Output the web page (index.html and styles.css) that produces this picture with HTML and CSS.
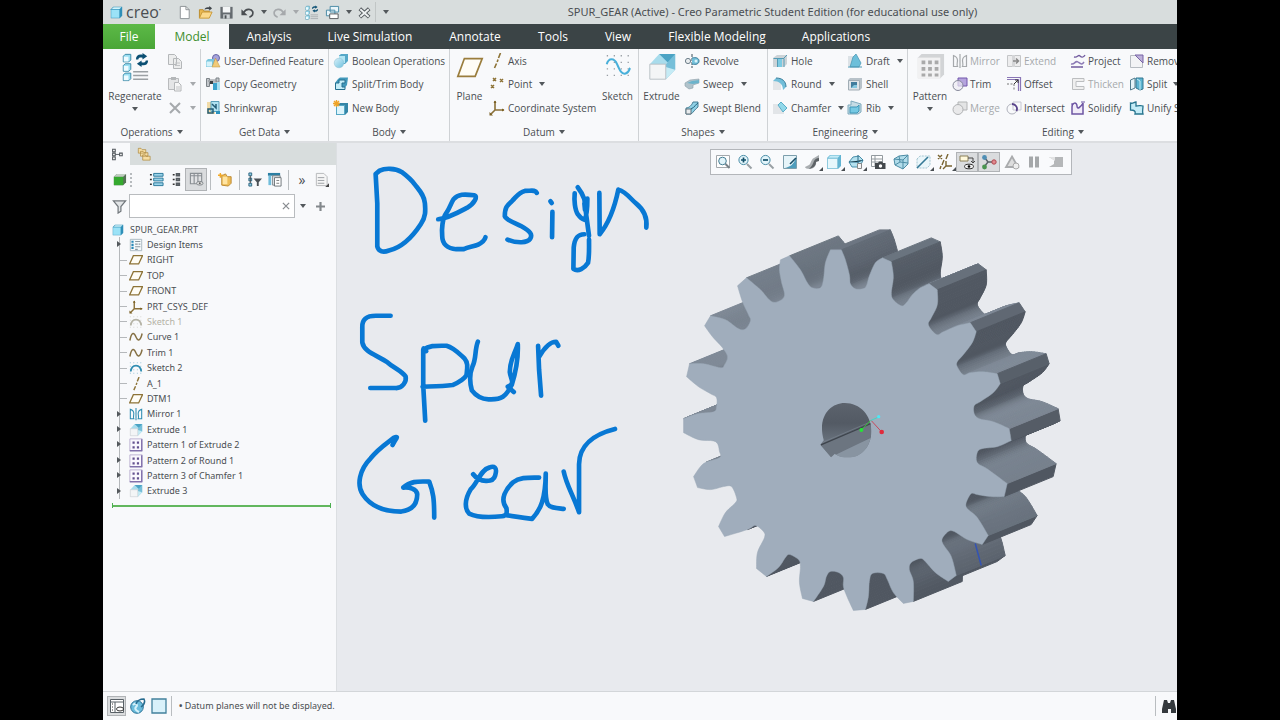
FILE: index.html
```html
<!DOCTYPE html>
<html lang="en">
<head>
<meta charset="utf-8">
<title>SPUR_GEAR (Active) - Creo Parametric Student Edition</title>
<link rel="stylesheet" href="styles.css">
</head>
<body>
<svg class="sprite" aria-hidden="true">
  <defs>
    <linearGradient id="g-blue" x2="1" y2="1"><stop stop-color="#d8f1fa"/><stop offset="1" stop-color="#6fc0dd"/></linearGradient>
    <linearGradient id="g-hole" x2="0" y2="1"><stop stop-color="#5f6670"/><stop offset=".4" stop-color="#535a64"/><stop offset=".75" stop-color="#6e7883"/><stop offset="1" stop-color="#8b97a4"/></linearGradient>
  </defs>
  <symbol id="cube" viewBox="0 0 16 16"><path d="M1 4 4 1h11v11l-3 3H1z" fill="#2f8fb8"/><path d="M1.500 4.500h10v10h-10z" fill="#9be2f7"/><path d="M2.200 3.700 4.400 1.600H14l-2.200 2.100z" fill="#d2f4fc"/></symbol>
  <symbol id="cubelight" viewBox="0 0 16 16"><path d="M1 4 4 1h11v11l-3 3H1z" fill="#62b4d2"/><path d="M1.500 4.500h10v10h-10z" fill="#e6f7fc" stroke="#8ac6dc" stroke-width=".8"/><path d="M2.200 3.700 4.400 1.600H14l-2.200 2.100z" fill="#c5ebf6"/></symbol>
  <symbol id="doc" viewBox="0 0 16 16"><path d="M3.500 1.500h6l3.500 3.500v9.500H3.500z" fill="#fff" stroke="#8b9093"/><path d="M9.500 1.500V5H13" fill="none" stroke="#8b9093"/></symbol>
  <symbol id="open" viewBox="0 0 16 16"><path d="M1.500 14V5h4l1 1.500H12V8" fill="#e9b850" stroke="#b98a2c"/><path d="m1.500 14 3-6.500H15L12 14z" fill="#fbd98b" stroke="#c79838"/><path d="M7 5c0-2 2-3 5-2.500V1l3 2.500L12 6V4.500C9.500 4 8 4 7 5z" fill="#3f454a"/></symbol>
  <symbol id="save" viewBox="0 0 16 16"><path d="M1.500 2h13v12.500h-13z" fill="#656b70"/><path d="M4 2h8v6H4z" fill="#f4f6f7"/><path d="M4.500 10h7v4.500h-7z" fill="#cfd4d7"/><path d="M6 11h2v3.500H6z" fill="#4a5054"/></symbol>
  <symbol id="undo" viewBox="0 0 16 16"><path d="M4 8c2-4 8-4.500 9.500-1 1 3-1 5-3.500 6" fill="none" stroke="currentColor" stroke-width="1.800"/><path d="M1.500 4.500v6.500h6.500z" fill="currentColor"/></symbol>
  <symbol id="redo" viewBox="0 0 16 16"><path d="M12 8c-2-4-8-4.500-9.500-1-1 3 1 5 3.500 6" fill="none" stroke="currentColor" stroke-width="1.800"/><path d="M14.500 4.500v6.500H8z" fill="currentColor"/></symbol>
  <symbol id="regen" viewBox="0 0 32 32"><g fill="#9be0f3" stroke="#3a87a5"><path d="M3.500 4.500 5.500 2.500h6v6l-2 2h-6zM3.500 14.500l2-2h6v6l-2 2h-6zM3.500 24.500l2-2h6v6l-2 2h-6z"/></g><path d="M4 5h5v5H4zM4 15h5v5H4zM4 25h5v5H4z" fill="#eefbff"/><g fill="#0b4f73"><path d="M17 8c0-4 3-6 7-5V1l5 3.500L24 8V6c-3-.5-4 0-4.500 2zM30 9c0 4-3 6-7 5v2l-5-3.500L23 9v2c3 .5 4 0 4.500-2z"/></g><path d="M14 21h16M14 25h16M14 29h16" stroke="#9ba0a4" stroke-width="1.500"/></symbol>
  <symbol id="windows" viewBox="0 0 16 16"><path d="M5.500 1.500h9v6h-9zM1.500 5.500h9v6h-9z" fill="#eaf5fa" stroke="#4487a3"/><path d="M5 9.500h9v5H5z" fill="#fff" stroke="#53585b"/></symbol>
  <symbol id="close" viewBox="0 0 16 16"><path d="m3 4 10 9m0-9-10 9" stroke="#53595d" stroke-width="4"/><path d="m3.500 4.500 9 8m0-8-9 8" stroke="#eef1f2" stroke-width="2"/></symbol>
  <symbol id="copy" viewBox="0 0 16 16"><path d="M1.500 1.500h6l2 2v8h-8zM6.500 5.500h5l3 3v7h-8z" fill="#eceded" stroke="#b4b7b9"/><path d="M8 10h5M8 12.500h5" stroke="#c2c4c6"/></symbol>
  <symbol id="paste" viewBox="0 0 16 16"><path d="M1.500 2.500h10v11h-10z" fill="#e4e5e6" stroke="#b9bbbd"/><path d="M4 1h5v3H4z" fill="#b4b7b9"/><path d="M7.500 6.500h4l2.500 2.500v6H7.500z" fill="#f6f6f6" stroke="#b4b7b9"/><path d="M9 11h4m-4 2h4" stroke="#c2c4c6"/></symbol>
  <symbol id="cross" viewBox="0 0 16 16"><path d="m3 3 10 10M13 3 3 13" stroke="currentColor" stroke-width="2"/></symbol>
  <symbol id="udf" viewBox="0 0 16 16"><circle cx="11" cy="5" r="3.500" fill="#a6a3dc" stroke="#6966a5"/><path d="M1 8 3 6h6v6l-2 2H1z" fill="#79c6de"/><path d="M1.500 8.500H7v5H1.500z" fill="#d5f2fa"/><path d="M10.500 5 15 14H7z" fill="#f1ca78" stroke="#b9923e" stroke-width=".5"/></symbol>
  <symbol id="copygeo" viewBox="0 0 16 16"><path d="M1.500 2.500h3v8h-3zM11 2h3v4h-3z" fill="#c3c7cb" stroke="#7d8388"/><path d="M4 4h7v2H4z" fill="#e2e4e7" stroke="#888d92"/><path d="M8 7h4v7H8z" fill="#3ba3cd"/><path d="M12 6h3v8h-3z" fill="#aadff0"/><path d="M5 5h3v3H5z" fill="#3a3f43"/></symbol>
  <symbol id="shrink" viewBox="0 0 16 16"><path d="M2 2h8v12H2z" fill="#f1dba8"/><path d="M6 1.500h8v10H6z" fill="#b1e2f1" stroke="#5b9fb8"/><path d="m7 4 4 4V4M3 9h5v4H3z" fill="none" stroke="#245d77" stroke-width="1.500"/><path d="M11 11h4v3h-4z" fill="#2d93bd"/></symbol>
  <symbol id="bool" viewBox="0 0 16 16"><path d="M6 2.500 8 1h7v7l-3 3H6z" fill="#56a8c8"/><path d="M6 3h6v7H6z" fill="#b2e5f3"/><circle cx="6" cy="10" r="4.800" fill="url(#g-blue)" stroke="#8dbfd0" stroke-width=".5"/></symbol>
  <symbol id="splitbody" viewBox="0 0 16 16"><path d="M5 3 7 1.500h8L14 9l-3 4H3l-1-6z" fill="#4299bb"/><path d="M2.500 7H6V4h6v3H9v4h3v2.500H2.500z" fill="#c5edf8" stroke="#256f8f"/></symbol>
  <symbol id="newbody" viewBox="0 0 16 16"><path d="M3 5 6 3h9v9l-3 3H3z" fill="#3485a6"/><path d="M3.500 5.500h8v9h-8z" fill="#dcf4fb" stroke="#56a7c5"/><path d="M3.500 0v7M0 3.500h7M1 1l5 5m0-5L1 6" stroke="#f0a427" stroke-width="1.400"/></symbol>
  <symbol id="plane" viewBox="0 0 16 16"><path d="M5 3h10.500l-4.500 9.500H.7z" fill="#fffdf6" stroke="#8d7337" stroke-width="1.500"/></symbol>
  <symbol id="planebig" viewBox="0 0 32 32"><path d="M10 7h19l-7.500 19H3z" fill="#fffdf6" stroke="#9a7d3c" stroke-width="1.800"/></symbol>
  <symbol id="axis" viewBox="0 0 16 16"><path d="m11.500 0-2 5M9 6.500 8.200 9M7.500 10.500 5.500 15" fill="none" stroke="#8d7337" stroke-width="1.600"/></symbol>
  <symbol id="point" viewBox="0 0 16 16"><path d="m4 2 3 3m0-3L4 5m7-2 3 3m0-3-3 3M2 9l3 3m0-3-3 3" stroke="#8d7337" stroke-width="1.500"/></symbol>
  <symbol id="csys" viewBox="0 0 16 16"><path d="M6 1v9h9M6 10l-4.500 4.500" fill="none" stroke="#8a7038" stroke-width="1.600"/><path d="M4.500 3 6 .5 7.500 3zM13 8.500l2.500 1.500-2.500 1.500zM.5 12v3.500H4z" fill="#7a6024"/></symbol>
  <symbol id="sketchbig" viewBox="0 0 32 32"><path d="M4 4h26M4 11h26M4 18h26M4 25h26" stroke="#999fa5" stroke-width="1.400" stroke-dasharray="1.400 6"/><path d="M4 13C6 6 12 6 15 13s5 11 9 10 4-5 5-6" fill="none" stroke="#49b0da" stroke-width="2.200"/></symbol>
  <symbol id="extrudebig" viewBox="0 0 32 32"><path d="M3 13 13 2h17L20 13z" fill="#a8dcec"/><path d="M13 2h17v17z" fill="#4ba3c4"/><path d="M20 13 30 2v17L20 29z" fill="#76bfd9"/><path d="m20 29 10-10-10-3z" fill="#c5ebf5"/><path d="M3 13h17v16H3z" fill="#f3f5f6" stroke="#b8bfc4"/></symbol>
  <symbol id="revolve" viewBox="0 0 16 16"><path d="M8 1v14" stroke="#394c59" stroke-dasharray="3 1"/><circle cx="4" cy="8" r="2.600" fill="#e9edef" stroke="#6d7e89"/><path d="M8 5c4-1 7 0 7 3s-3 4-7 3" fill="#73c0da" stroke="#3d7e9b"/><circle cx="12" cy="8" r="1.500" fill="#daf3fa"/></symbol>
  <symbol id="sweep" viewBox="0 0 16 16"><path d="m1 7 5-3 9-1v4L9 9v3l-4 1-4-3z" fill="#b1c3cb" stroke="#8b9ea8" stroke-width=".6"/><path d="m3 7 5-2 7-1v3L9 8z" fill="#6cb4cc"/></symbol>
  <symbol id="blend" viewBox="0 0 16 16"><path d="M2 14V8c3 0 6-3 7-6h5v5c-3 2-5 6-7 7z" fill="#8fd1e6" stroke="#477e95"/><path d="M2 9h5v5H2z" fill="#e8ecee" stroke="#65727a"/><path d="M7 9c4-2 5-5 7-6" stroke="#22607c" fill="none"/></symbol>
  <symbol id="hole" viewBox="0 0 16 16"><path d="m1 5 4-3h10v9l-3 3H1z" fill="#ccd3d7"/><path d="M5 5h5v9H5z" fill="#7ccae2"/><path d="M1.500 5.500H12V14M5.500 14V5.500M12 5l3-3" fill="none" stroke="#549bb5"/></symbol>
  <symbol id="round" viewBox="0 0 16 16"><path d="M1 5h8v9H1z" fill="#e3e6e9"/><path d="M1 5 4 2c6 0 10 3 10 9l-3 3c0-6-4-9-10-9z" fill="#72bed9"/><path d="M4 2c6 0 10 3 10 9" fill="none" stroke="#3b7f9b"/></symbol>
  <symbol id="chamfer" viewBox="0 0 16 16"><path d="M1 4h7l4 5v5H1z" fill="#e2e5e8"/><path d="m6 5 3-3 6 6-4 4z" fill="#91d8ea" stroke="#5baec8"/></symbol>
  <symbol id="draft" viewBox="0 0 16 16"><path d="M1 3h7v10H1z" fill="#dce2e6"/><path d="m6 4 3-3 5 9-2 4H3z" fill="#6dbfda" stroke="#4592b0" stroke-width=".7"/><path d="M1 14h14" stroke="#4d98b5"/></symbol>
  <symbol id="shell" viewBox="0 0 16 16"><path d="m1 4 2-2h12v10l-2 2H1z" fill="#b8c2c9"/><path d="M1.500 4.500h11V14h-11z" fill="#dfe4e8" stroke="#a1adb5"/><path d="M4 6h6v6H4z" fill="#417c9c"/><path d="m4 12 3-3h3v3z" fill="#84c7df"/></symbol>
  <symbol id="rib" viewBox="0 0 16 16"><path d="M1 5h3V1l10 3v8l-3 2H1z" fill="#c6dce5" stroke="#7faabd"/><path d="M3 7h7l2-2v6l-2 2H3z" fill="#76c9e3" stroke="#3f96b7"/></symbol>
  <symbol id="patternbig" viewBox="0 0 32 32"><path d="m3 6 4-4h24v22l-4 4H3z" fill="#d2d4d6"/><path d="M3 6h24v22H3z" fill="#f1f1f2"/><g fill="#aaa"><path d="M7 9h4v4H7zM14 9h4v4h-4zM21 9h4v4h-4zM7 16h4v4H7zM14 16h4v4h-4zM21 16h4v4h-4zM7 23h4v3H7zM14 23h4v3h-4zM21 23h4v3h-4z"/></g></symbol>
  <symbol id="mirror" viewBox="0 0 16 16"><path d="M1.500 2.500c3 1 4 3 4 5s-1 4 0 6h-4zM14.500 2.500c-3 1-4 3-4 5s1 4 0 6h4zM8 1v14" fill="none" stroke="currentColor" stroke-width="1.200"/></symbol>
  <symbol id="extend" viewBox="0 0 16 16"><path d="M1.500 2.500h13v11h-13z" fill="#ededee" stroke="#c4c6c8"/><path d="M6 2h3v12H6z" fill="#d5d6d8"/><path d="M7 8h5M10 5.500 12.500 8 10 10.500" fill="none" stroke="#888" stroke-width="1.500"/></symbol>
  <symbol id="trim" viewBox="0 0 16 16"><path d="M6 2h9v8H6z" fill="#b5a4dd" stroke="#7357ac"/><circle cx="6" cy="9.500" r="5" fill="#eeedf3" fill-opacity=".7" stroke="#85889a"/></symbol>
  <symbol id="merge" viewBox="0 0 16 16"><path d="M6 2h9v8H6z" fill="#e3e4e5" stroke="#b3b5b6"/><circle cx="6" cy="9.500" r="5" fill="#e9e9ea" stroke="#b0b2b4"/></symbol>
  <symbol id="offset" viewBox="0 0 16 16"><path d="M1 1.500h13.500V15M1 3.500h11.500V15" fill="none" stroke="#8a76b6" stroke-width="1.200"/><path d="M1 8h7v7" fill="none" stroke="#777" stroke-dasharray="2 1.500"/><path d="m8 8 4-4m-3 0h3v3" fill="none" stroke="#333"/></symbol>
  <symbol id="intersect" viewBox="0 0 16 16"><path d="M7 2h8v8H7z" fill="none" stroke="#c6c6d2"/><circle cx="6" cy="9" r="5" fill="none" stroke="#b0b2bc"/><path d="M6 4c4 0 6 4 4.500 7" fill="none" stroke="#59438b" stroke-width="1.800"/></symbol>
  <symbol id="project" viewBox="0 0 16 16"><path d="M1 11c4 1 4-4 7-2s4 3 6 0" fill="none" stroke="#8d7bb6" stroke-width="1.500"/><path d="M4 4c4 1 4-3 6-1s4 1 5-1M1 14h12" fill="none" stroke="#725b9f" stroke-width="1.300"/></symbol>
  <symbol id="thicken" viewBox="0 0 16 16"><path d="M14 2.500H2.500v11H14v-3H6v-5h8z" fill="#efefef" stroke="#bcbec0"/></symbol>
  <symbol id="solidify" viewBox="0 0 16 16"><path d="M2 14V7c0-5 5-5 5-1s4 1 6-3v11z" fill="#f1ecf8" stroke="#6d55a3" stroke-width="1.500"/><path d="M1 4h3m7-2h4" stroke="#6d55a3"/></symbol>
  <symbol id="remove" viewBox="0 0 16 16"><path d="M1.500 2.500h12v12h-12z" fill="#f2f3f5" stroke="#b6bbc1"/><path d="M6 2h8v8z" fill="#bdb1da" stroke="#7763a4"/></symbol>
  <symbol id="split" viewBox="0 0 16 16"><path d="M1.500 4 6 2v10l-4.500 2z" fill="#e5f3f8" stroke="#517c8d"/><path d="M7 2h7v11l-3 1-4-2z" fill="#5cb4d1" stroke="#347790"/><path d="m8 3 3 2v9" stroke="#c6ebf5" fill="none"/></symbol>
  <symbol id="unify" viewBox="0 0 16 16"><path d="M1.500 3C4 4 5 2 7 2v4c4 0 4-1 7 0 0 4-1 4 0 8H6c1-3-1-4-4.500-4z" fill="#c4ecf7" stroke="#27758f" stroke-width="1.300"/></symbol>
  <symbol id="treeicon" viewBox="0 0 16 16"><path d="M3 2.500h3v3H3zM3 7h3v3H3zM3 11.500h3v3H3zM11 7h3v3h-3z" fill="#fff" stroke="#50565b" stroke-width="1.200"/><path d="M6 8.500h5" stroke="#50565b"/></symbol>
  <symbol id="folders" viewBox="0 0 16 16"><path d="M1.500 3V1.500h3L6 3h4v4H1.500zM4 7V5h3l1 1.500h4.500v4H4zM6.500 11V9h3l1 1.500H15V15H6.500z" fill="#f6dda2" stroke="#aa873d" stroke-width=".8"/></symbol>
  <symbol id="greencube" viewBox="0 0 16 16"><path d="m2 5 3-3h10v9l-3 3H2z" fill="#567157"/><path d="M2 5h10v9H2z" fill="#35a92f"/><path d="m2 5 3-3h10l-3 3z" fill="#c0cec1"/></symbol>
  <symbol id="listblue" viewBox="0 0 16 16"><path d="M5 1.500h10v3H5zM5 6.500h10v3H5zM5 11.500h10v3H5z" fill="#9bd4ea" stroke="#28779a"/><path d="M1 3h2M1 8h2m-2 5h2" stroke="#333" stroke-width="1.500"/></symbol>
  <symbol id="listgray" viewBox="0 0 16 16"><path d="M8 2h3v2H8zM8 7h3v2H8zM8 12h3v2H8z" stroke="#555b60" stroke-width="1.700" fill="#a9adb0"/><path d="M4 3h2M4 8h2m-2 5h2" stroke="#333" stroke-width="1.500"/></symbol>
  <symbol id="cols" viewBox="0 0 16 16"><path d="M1.500 1.500h12v11h-12zM2 4h12M5.500 2v11m4-11v11" fill="#e1e2e4" stroke="#8a8f94" stroke-width="1.200"/><ellipse cx="11.500" cy="12" rx="3.500" ry="2" fill="#ddd" stroke="#81868b"/><circle cx="11.500" cy="12" r="1" fill="#666"/></symbol>
  <symbol id="orange" viewBox="0 0 16 16"><path d="m4 4 4-2 2 3h4v7l-3 3-7-1z" fill="#eebd57" stroke="#bb8830"/><path d="M5 5h5v8H5z" fill="#ffe4a2"/><path d="M2.500 1v5M0 3.500h5" stroke="#f2a927" stroke-width="1.500"/></symbol>
  <symbol id="treefilter" viewBox="0 0 16 16"><path d="M2 1h3v3H2zM2 6.500h3v3H2zM2 12h3v3H2z" fill="#8bcbe3" stroke="#2f6580"/><path d="M3.500 4v8" stroke="#444"/><path d="M7 7h9l-3.500 4v4h-2v-4z" fill="#4b5156"/></symbol>
  <symbol id="columns" viewBox="0 0 16 16"><path d="M1 1h13v3H1z" fill="#2c7fa3"/><path d="M1.500 4h3v10h-3z" fill="#71bddb"/><path d="M6 4h8v10H6z" fill="#e4e8eb" stroke="#7c8388"/><path d="M8 6h7v9H8z" fill="#fff" stroke="#6c7378"/><path d="M10 9h3m-3 3h3" stroke="#777"/></symbol>
  <symbol id="docset" viewBox="0 0 16 16"><path d="M2.500 1.500h8L14 5v9.500H2.500z" fill="#f6f6f6" stroke="#b5b8ba"/><path d="M4 6h7M4 9h7m-7 3h7" stroke="#999da1"/><path d="M16 12v4h-4z" fill="#444"/></symbol>
  <symbol id="funnel" viewBox="0 0 16 16"><path d="M1.500 2h13L9.500 8v5l-3 2V8z" fill="#e2e5e7" stroke="#71777c" stroke-width="1.300"/></symbol>
  <symbol id="design" viewBox="0 0 16 16"><path d="M1.500 1.500h13v13h-13z" fill="#f5fafc" stroke="#a4b4bd"/><path d="M4 3v10" stroke="#2a89b7" stroke-width="2.500" stroke-dasharray="2.500 1"/><path d="M7 4h6M7 7h3m1 0h2m-6 3h6m-6 3h3" stroke="#8a979f" stroke-width="1.200"/></symbol>
  <symbol id="sk" viewBox="0 0 16 16"><path d="M1 2h14M1 6h14M1 10h14M1 14h14" stroke="currentColor" stroke-opacity=".6" stroke-dasharray="1 3"/><path d="M2 12C3 3 13 3 14 12" fill="none" stroke="currentColor" stroke-width="2"/></symbol>
  <symbol id="curve" viewBox="0 0 16 16"><path d="M1 12C3 1 6 3 8 8s5 5 7-4" fill="none" stroke="#857044" stroke-width="1.700"/></symbol>
  <symbol id="pattern" viewBox="0 0 16 16"><path d="M1 1h14v14H1z" fill="#faf8fd" stroke="#b6abce"/><path d="M14.500 1.500v13H1" fill="none" stroke="#8171ab" stroke-width="1.500"/><path d="M4 4h2.500v2.500H4zM9 4h2.500v2.500H9zM4 9.500h2.500V12H4zM9 9.500h2.500V12H9z" fill="#64518f"/></symbol>
  <symbol id="refit" viewBox="0 0 16 16"><path d="M1.500 1.500h13v12h-13z" fill="#fff" stroke="#a4a9ad"/><circle cx="7.500" cy="7" r="3.800" fill="#e2f4fa" stroke="#457d93"/><path d="m10.500 10 4 4" stroke="#768087" stroke-width="2"/></symbol>
  <symbol id="zoomin" viewBox="0 0 16 16"><circle cx="6.500" cy="6" r="4.600" fill="#e2f4fa" stroke="#4b8ea8"/><path d="m10 10 4.500 4.500" stroke="#9aa0a4" stroke-width="2"/><path d="M4 6h5M6.500 3.500v5" stroke="#124e68" stroke-width="1.700"/></symbol>
  <symbol id="zoomout" viewBox="0 0 16 16"><circle cx="6.500" cy="6" r="4.600" fill="#e2f4fa" stroke="#4b8ea8"/><path d="m10 10 4.500 4.500" stroke="#9aa0a4" stroke-width="2"/><path d="M4 6h5" stroke="#124e68" stroke-width="1.700"/></symbol>
  <symbol id="repaint" viewBox="0 0 16 16"><path d="M1.500 1.500h13v13h-13z" fill="#e6f4f9" stroke="#7c9eac"/><path d="M14 4v10H3c5-1 9-4 11-10z" fill="#4f9dbc"/><path d="M14 4 8 10" stroke="#184d66" stroke-width="1.600"/></symbol>
  <symbol id="shade" viewBox="0 0 16 16"><path d="M15 1v4l-3 2c1 4-2 8-6 8-3 0-5-1-5-2l4-2c2-1 2-6 5-7z" fill="#a9adb0"/><path d="M15 4v3l-3 1c0 4-3 6-7 7 3-3 4-5 5-8 1-2 3-3 5-3z" fill="#5c6165"/></symbol>
  <symbol id="view" viewBox="0 0 16 16"><path d="M1 8 5 3l6-1 4 4-3 7H4z" fill="#b4e1ef" stroke="#4a8faa"/><path d="M1 8h9l5-2M10 1v8" stroke="#2b6d88"/><path d="M9.500 9.500h4v5h-4z" fill="#f4f4f4" stroke="#888"/></symbol>
  <symbol id="camera" viewBox="0 0 16 16"><path d="M1.500 1.500h11v11h-11zM2 5h10M2 8h10M5 2v10" fill="#fff" stroke="#939a9f"/><path d="M5 9h3l1-1.500h3L13 9h2.500v6H5z" fill="#43484c"/><circle cx="10.500" cy="12" r="1.700" fill="#fff"/></symbol>
  <symbol id="persp" viewBox="0 0 16 16"><path d="m1 5 5-3 9-1v9l-5 5-8-4z" fill="#b1dcea" stroke="#4c8ca5"/><path d="m1 5 9 1 5-5m-5 5v9M2 11l5-3 8 1M6 2l1 6" fill="none" stroke="#4c8ca5"/></symbol>
  <symbol id="section" viewBox="0 0 16 16"><path d="m2 5 3-3h10v9l-3 3H2z" fill="#eaf6fa" stroke="#a4c6d2" stroke-dasharray="2 1"/><path d="M2 14 13 3" stroke="#347895" stroke-width="1.600"/></symbol>
  <symbol id="datums" viewBox="0 0 16 16"><path d="m1 1 4 4m0-4L1 5m10-5L9 5M7 6 5 11m-1 1-1 3M9 7v5h6m-6 0-3 3" fill="none" stroke="#796431" stroke-width="1.400"/></symbol>
  <symbol id="annot" viewBox="0 0 16 16"><path d="M1 2h8v5H1z" fill="#fff9dc" stroke="#8b8058"/><path d="M9 4h5v5m-2-2 2 2 2-2" fill="none" stroke="#444"/><ellipse cx="10" cy="12.500" rx="4.500" ry="2.300" fill="#eee" stroke="#333"/><circle cx="10" cy="12.500" r="1.300"/></symbol>
  <symbol id="spin" viewBox="0 0 16 16"><path d="m4 4 3 4-4 5M7 8h6" fill="none" stroke="#596268" stroke-width="1.500"/><circle cx="3.500" cy="3.500" r="2.400" fill="#4f8fb5"/><circle cx="3.500" cy="13" r="2.400" fill="#49944f"/><circle cx="13" cy="8" r="2.200" fill="#e0898e" stroke="#b04a51"/></symbol>
  <symbol id="tri" viewBox="0 0 16 16"><path d="M8 2.500 14 13H2z" fill="#ddd" stroke="#a9abad" stroke-width="1.800"/><circle cx="12" cy="12" r="3" fill="#eee" stroke="#aaa"/></symbol>
  <symbol id="pause" viewBox="0 0 16 16"><path d="M3 2.500h4v11H3zM9 2.500h4v11H9z" fill="#a5a8aa"/></symbol>
  <symbol id="end" viewBox="0 0 16 16"><path d="M1 3h14v10H1l5-3V6z" fill="#b5b7b9"/><path d="M1 3h6v4z" fill="#e2e3e4"/></symbol>
  <symbol id="panel" viewBox="0 0 16 16"><path d="M1.500 1.500h13v13h-13z" fill="#fff" stroke="#596167"/><path d="M2 4h12M6 4v10" stroke="#596167"/><path d="M3 6h1m-1 3h1m-1 3h1" stroke="#333"/><ellipse cx="11" cy="11" rx="3.500" ry="2" fill="none" stroke="#333"/></symbol>
  <symbol id="globe" viewBox="0 0 16 16"><circle cx="7" cy="9" r="6.300" fill="#6bbcdc" stroke="#2d7397"/><path d="M3 7c3-3 5 0 3 2s1 4 3 5" fill="none" stroke="#d6f1fa" stroke-width="2"/><path d="M11 9c4-3 4-6 3-8-4 0-7 2-8 5" fill="none" stroke="#276b8e" stroke-width="1.500"/></symbol>
  <symbol id="square" viewBox="0 0 16 16"><path d="M1 1h14v14H1z" fill="#d9f1fa" stroke="#41809c" stroke-width="1.300"/></symbol>
  <symbol id="binoc" viewBox="0 0 16 16"><path d="M3 2h3l1 3h2l1-3h3l2 9v4h-5v-4H7v4H1v-4z" fill="#34393d"/></symbol>
</svg>

<div class="app">
  <header class="titlebar">
    <div class="brand"><svg class="ic"><use href="#cube"/></svg><span>creo<sup>•</sup></span></div>
    <nav class="quick" aria-label="Quick access">
      <button aria-label="New"><svg class="ic"><use href="#doc"/></svg></button>
      <button aria-label="Open"><svg class="ic"><use href="#open"/></svg></button>
      <button aria-label="Save"><svg class="ic"><use href="#save"/></svg></button>
      <button aria-label="Undo"><svg class="ic"><use href="#undo"/></svg></button>
      <button class="slim" aria-label="Undo list"><i class="caret"></i></button>
      <button class="off" aria-label="Redo"><svg class="ic"><use href="#redo"/></svg></button>
      <button class="slim off" aria-label="Redo list"><i class="caret"></i></button>
      <button aria-label="Regenerate model"><svg class="ic"><use href="#regen"/></svg></button>
      <button aria-label="Windows"><svg class="ic"><use href="#windows"/></svg></button>
      <button class="slim" aria-label="Windows list"><i class="caret"></i></button>
      <button aria-label="Close"><svg class="ic"><use href="#close"/></svg></button>
      <button class="customize" aria-label="Customize toolbar"><i class="caret"></i></button>
    </nav>
    <h1>SPUR_GEAR (Active) - Creo Parametric Student Edition (for educational use only)</h1>
  </header>

  <nav class="tabs" aria-label="Ribbon tabs">
    <button class="tab file">File</button>
    <button class="tab model">Model</button>
    <button class="tab analysis">Analysis</button>
    <button class="tab live">Live Simulation</button>
    <button class="tab annotate">Annotate</button>
    <button class="tab tools">Tools</button>
    <button class="tab view">View</button>
    <button class="tab flexible">Flexible Modeling</button>
    <button class="tab apps">Applications</button>
  </nav>

  <section class="ribbon" aria-label="Model ribbon">
    <div class="group operations">
      <div class="items">
        <button class="big"><svg><use href="#regen"/></svg><span>Regenerate</span><i class="caret"></i></button>
        <div class="col">
          <button class="cmd off" aria-label="Copy"><svg class="ic"><use href="#copy"/></svg></button>
          <button class="cmd off" aria-label="Paste"><svg class="ic"><use href="#paste"/></svg><i class="caret"></i></button>
          <button class="cmd off" aria-label="Delete"><svg class="ic"><use href="#cross"/></svg><i class="caret"></i></button>
        </div>
      </div>
      <button class="gname">Operations<i class="caret"></i></button>
    </div>
    <div class="group getdata">
      <div class="items"><div class="col">
        <button class="cmd"><svg class="ic"><use href="#udf"/></svg>User-Defined Feature</button>
        <button class="cmd"><svg class="ic"><use href="#copygeo"/></svg>Copy Geometry</button>
        <button class="cmd"><svg class="ic"><use href="#shrink"/></svg>Shrinkwrap</button>
      </div></div>
      <button class="gname">Get Data<i class="caret"></i></button>
    </div>
    <div class="group bodygrp">
      <div class="items"><div class="col">
        <button class="cmd"><svg class="ic"><use href="#bool"/></svg>Boolean Operations</button>
        <button class="cmd"><svg class="ic"><use href="#splitbody"/></svg>Split/Trim Body</button>
        <button class="cmd"><svg class="ic"><use href="#newbody"/></svg>New Body</button>
      </div></div>
      <button class="gname">Body<i class="caret"></i></button>
    </div>
    <div class="group datum">
      <div class="items">
        <button class="big"><svg><use href="#planebig"/></svg><span>Plane</span></button>
        <div class="col">
          <button class="cmd"><svg class="ic"><use href="#axis"/></svg>Axis</button>
          <button class="cmd"><svg class="ic"><use href="#point"/></svg>Point<i class="caret"></i></button>
          <button class="cmd"><svg class="ic"><use href="#csys"/></svg>Coordinate System</button>
        </div>
        <button class="big"><svg><use href="#sketchbig"/></svg><span>Sketch</span></button>
      </div>
      <button class="gname">Datum<i class="caret"></i></button>
    </div>
    <div class="group shapes">
      <div class="items">
        <button class="big"><svg><use href="#extrudebig"/></svg><span>Extrude</span></button>
        <div class="col">
          <button class="cmd"><svg class="ic"><use href="#revolve"/></svg>Revolve</button>
          <button class="cmd"><svg class="ic"><use href="#sweep"/></svg>Sweep<i class="caret"></i></button>
          <button class="cmd"><svg class="ic"><use href="#blend"/></svg>Swept Blend</button>
        </div>
      </div>
      <button class="gname">Shapes<i class="caret"></i></button>
    </div>
    <div class="group engineering">
      <div class="items">
        <div class="col">
          <button class="cmd"><svg class="ic"><use href="#hole"/></svg>Hole</button>
          <button class="cmd"><svg class="ic"><use href="#round"/></svg>Round<i class="caret"></i></button>
          <button class="cmd"><svg class="ic"><use href="#chamfer"/></svg>Chamfer<i class="caret"></i></button>
        </div>
        <div class="col">
          <button class="cmd"><svg class="ic"><use href="#draft"/></svg>Draft<i class="caret"></i></button>
          <button class="cmd"><svg class="ic"><use href="#shell"/></svg>Shell</button>
          <button class="cmd"><svg class="ic"><use href="#rib"/></svg>Rib<i class="caret"></i></button>
        </div>
      </div>
      <button class="gname">Engineering<i class="caret"></i></button>
    </div>
    <div class="group editing">
      <div class="items">
        <button class="big"><svg><use href="#patternbig"/></svg><span>Pattern</span><i class="caret"></i></button>
        <div class="col c1">
          <button class="cmd off"><svg class="ic"><use href="#mirror"/></svg>Mirror</button>
          <button class="cmd"><svg class="ic"><use href="#trim"/></svg>Trim</button>
          <button class="cmd off"><svg class="ic"><use href="#merge"/></svg>Merge</button>
        </div>
        <div class="col c2">
          <button class="cmd off"><svg class="ic"><use href="#extend"/></svg>Extend</button>
          <button class="cmd"><svg class="ic"><use href="#offset"/></svg>Offset</button>
          <button class="cmd"><svg class="ic"><use href="#intersect"/></svg>Intersect</button>
        </div>
        <div class="col c3">
          <button class="cmd"><svg class="ic"><use href="#project"/></svg>Project</button>
          <button class="cmd off"><svg class="ic"><use href="#thicken"/></svg>Thicken</button>
          <button class="cmd"><svg class="ic"><use href="#solidify"/></svg>Solidify</button>
        </div>
        <div class="col c4">
          <button class="cmd"><svg class="ic"><use href="#remove"/></svg>Remove</button>
          <button class="cmd"><svg class="ic"><use href="#split"/></svg>Split<i class="caret"></i></button>
          <button class="cmd"><svg class="ic"><use href="#unify"/></svg>Unify Surfaces</button>
        </div>
      </div>
      <button class="gname">Editing<i class="caret"></i></button>
    </div>
  </section>

  <main class="work">
    <aside class="side">
      <div class="sidetabs">
        <button class="stab on" aria-label="Model tree"><svg class="ic"><use href="#treeicon"/></svg></button>
        <button class="stab" aria-label="Folders"><svg class="ic"><use href="#folders"/></svg></button>
      </div>
      <div class="sidetools">
        <button class="t1" aria-label="Model"><svg class="ic"><use href="#greencube"/></svg></button>
        <i class="grip"></i>
        <button aria-label="Expand list"><svg class="ic"><use href="#listblue"/></svg></button>
        <button aria-label="Collapse list"><svg class="ic"><use href="#listgray"/></svg></button>
        <button class="pressed" aria-label="Show columns"><svg class="ic"><use href="#cols"/></svg></button>
        <i class="vline"></i>
        <button aria-label="Add item"><svg class="ic"><use href="#orange"/></svg></button>
        <i class="vline"></i>
        <button aria-label="Tree filters"><svg class="ic"><use href="#treefilter"/></svg></button>
        <button aria-label="Tree columns"><svg class="ic"><use href="#columns"/></svg></button>
        <i class="vline"></i>
        <button class="more" aria-label="More">»</button>
        <button aria-label="Settings"><svg class="ic"><use href="#docset"/></svg></button>
      </div>
      <div class="search">
        <svg class="ic"><use href="#funnel"/></svg>
        <label class="box"><input type="text" aria-label="Filter tree"><svg><use href="#cross"/></svg></label>
        <button aria-label="Filter options"><i class="caret"></i></button>
        <button class="plus" aria-label="Add filter"><svg viewBox="0 0 10 10"><path d="M5 0v10M0 5h10" stroke="#83888c" stroke-width="2.400"/></svg></button>
      </div>
      <ul class="tree">
        <li class="root"><svg class="ti"><use href="#cube"/></svg>SPUR_GEAR.PRT</li>
        <li class="exp"><svg class="ti"><use href="#design"/></svg>Design Items</li>
        <li><svg class="ti"><use href="#plane"/></svg>RIGHT</li>
        <li><svg class="ti"><use href="#plane"/></svg>TOP</li>
        <li><svg class="ti"><use href="#plane"/></svg>FRONT</li>
        <li><svg class="ti"><use href="#csys"/></svg>PRT_CSYS_DEF</li>
        <li class="hiddenitem"><svg class="ti"><use href="#sk"/></svg>Sketch 1</li>
        <li><svg class="ti"><use href="#curve"/></svg>Curve 1</li>
        <li><svg class="ti"><use href="#curve"/></svg>Trim 1</li>
        <li><svg class="ti blue"><use href="#sk"/></svg>Sketch 2</li>
        <li><svg class="ti"><use href="#axis"/></svg>A_1</li>
        <li><svg class="ti"><use href="#plane"/></svg>DTM1</li>
        <li class="exp"><svg class="ti blue"><use href="#mirror"/></svg>Mirror 1</li>
        <li class="exp"><svg class="ti"><use href="#extrudebig"/></svg>Extrude 1</li>
        <li class="exp"><svg class="ti"><use href="#pattern"/></svg>Pattern 1 of Extrude 2</li>
        <li class="exp"><svg class="ti"><use href="#pattern"/></svg>Pattern 2 of Round 1</li>
        <li class="exp"><svg class="ti"><use href="#pattern"/></svg>Pattern 3 of Chamfer 1</li>
        <li class="exp"><svg class="ti"><use href="#extrudebig"/></svg>Extrude 3</li>
      </ul>
      <div class="insert"></div>
    </aside>

    <section class="canvas" aria-label="Graphics area">
      <svg class="scene" viewBox="336 143 841 548" preserveAspectRatio="xMinYMin meet">
        <g id="gear"></g>
        <g transform="translate(670 410) scale(.33333)">
          <clipPath id="bore"><path d="M460 92C440 20 480-20 523-20c46 0 80 37 80 84 0 46-30 80-70 80-16 0-30-4-40-12l-11 11-32-38z"/></clipPath>
          <g clip-path="url(#bore)">
            <path d="M430-40h200v200H430z" fill="url(#g-hole)"/>
            <path d="M440 108 610 37v42L470 150z" fill="#6c7580"/>
            <path d="m470 148 140-68v80H470z" fill="#8894a1"/>
            <path d="m448 107 160-68" stroke="#3e444c" stroke-width="4"/>
            <path d="m452 100 150-64" stroke="#7a848f" stroke-width="2"/>
          </g>
          <path d="m573 61 27-28" stroke="#35c43c" stroke-width="3"/>
          <path d="m600 33 25-11" stroke="#3cd8c4" stroke-width="3"/>
          <path d="m603 33 31 34" stroke="#c8485a" stroke-width="3"/>
          <circle cx="573" cy="61" r="6" fill="#25e336"/><circle cx="625" cy="21" r="5" fill="#4fe6f5"/><circle cx="634" cy="67" r="7" fill="#e02b3c"/>
        </g>
        <path d="m975 544 6 22" stroke="#3353b4" stroke-width="1.500"/>
        <g class="ink" transform="translate(340 150) scale(.33333)">
          <path d="M104 72 109 160V290c4 16 18 18 35 12 40-10 70-40 96-80 15-22 14-40 12-62-2-24-16-38-30-56-12-16-24-26-40-38-20-12-50-12-66-4z"/>
          <path d="M292 208c28-2 60-20 86-34 24-14 34-36 22-38-30-4-48-4-62 12-8 12-10 24-22 42-12 16-14 50-12 68 0 24 16 38 42 40h22c14-8 32-8 44-14 12-6 20-14 22-22"/>
          <path d="M588 129c-4-10-16-6-36-6-18 4-24 16-38 30-16 14-22 20-22 46 4 12 32 20 50 30 28 16 34 26 26 38-8 12-38 14-68 2"/>
          <path d="M629 154l4 5M635 186l-1 76"/>
          <path d="M702 130c-2 20 0 50 10 64 8 12 14 14 20 16 6-12 8-34 8-64M711 112c8 10 14 20 20 36l6 50 8 60M731 160l2 20"/>
          <path d="M731 253c-24 0-30 18-32 40l-1 64c14 10 34-2 44-18 4-20 3-40 3-70"/>
          <path d="m776 129 1 124c28-34 44-76 56-134 26 8 36 28 54 42 20 16 34 38 30 72"/>
          <path d="M149 498h-44c-30 0-42 12-41 34v46c6 30 44 38 76 60 20 18 40 24 54 42 4 16-10 36-30 35H88"/>
          <path d="m253 813-6-105V600c20-14 40-12 70-12 22 6 36 22 54 38 12 14 8 30 6 50-8 14-24 22-42 30-30 4-60 4-90 5M256 604l-8-8"/>
          <path d="M411 576c-10 26-4 50-16 74-10 24-8 50-2 72 12 16 28 26 50 27 40 2 52-8 70-44 12-38 20-76 18-122-8 28-24 46-24 84 2 20 18 34-6 44l18 16"/>
          <path d="m592 588 3 72 6 78M596 620c14-24 32-44 50-44l7 12"/>
          <path d="m167 864-12 22c8-18 22-28 4-22-26 20-48 34-70 62-34 34-42 80-24 108 22 34 60 52 116 52 30-4 48-20 48-52-2-16-24-22-42-20 24-22 50-18 78-18 12 32 15 50 15 108"/>
          <path d="M397 974c20 26 60 26 66 4 8-26-4-30-18-24-26 6-34 46-56 66-18 30-18 58-4 72 20 10 60 12 98 8 16-2 16-10 14-24-22-28 0-60 20-78 20-16 46-14 78-14M494 1096c20 4 50 8 80 12 26-28 40-60 41-136 0 46-4 70 6 92 8 12 28 12 48 14"/>
          <path d="M669 966c8 40 28 70 46 122V944c0-56 44-90 108-106"/>
        </g>
      </svg>
      <div class="viewbar" role="toolbar" aria-label="View">
        <button aria-label="Refit"><svg class="ic"><use href="#refit"/></svg></button>
        <button aria-label="Zoom in"><svg class="ic"><use href="#zoomin"/></svg></button>
        <button aria-label="Zoom out"><svg class="ic"><use href="#zoomout"/></svg></button>
        <button aria-label="Repaint"><svg class="ic"><use href="#repaint"/></svg></button>
        <button class="drop" aria-label="Rendering"><svg class="ic"><use href="#shade"/></svg></button>
        <button class="drop" aria-label="Display style"><svg class="ic"><use href="#cubelight"/></svg></button>
        <button class="drop" aria-label="Saved views"><svg class="ic"><use href="#view"/></svg></button>
        <button aria-label="View images"><svg class="ic"><use href="#camera"/></svg></button>
        <button aria-label="Perspective"><svg class="ic"><use href="#persp"/></svg></button>
        <button class="drop" aria-label="Section"><svg class="ic"><use href="#section"/></svg></button>
        <button class="drop" aria-label="Datum display"><svg class="ic"><use href="#datums"/></svg></button>
        <button class="pressed" aria-label="Annotations"><svg class="ic"><use href="#annot"/></svg></button>
        <button class="pressed" aria-label="Spin center"><svg class="ic"><use href="#spin"/></svg></button>
        <button aria-label="Simulate"><svg class="ic"><use href="#tri"/></svg></button>
        <button aria-label="Pause"><svg class="ic"><use href="#pause"/></svg></button>
        <button aria-label="End"><svg class="ic"><use href="#end"/></svg></button>
      </div>
    </section>
  </main>

  <footer class="status">
    <button class="pressed" aria-label="Navigator"><svg class="ic"><use href="#panel"/></svg></button>
    <button aria-label="Browser"><svg class="ic"><use href="#globe"/></svg></button>
    <button aria-label="Full screen"><svg class="ic"><use href="#square"/></svg></button>
    <i class="vline"></i>
    <p><b>•</b> Datum planes will not be displayed.</p>
    <i class="vline"></i>
    <button aria-label="Find"><svg class="ic"><use href="#binoc"/></svg></button>
  </footer>
</div>
<script src="gear.js"></script>
</body>
</html>
```
FILE: styles.css
```css
* { box-sizing: border-box; }
body {
  margin: 0;
  background: #000;
  color: #4a4e52;
  font: 10px/14px "Open Sans", "Noto Sans", sans-serif;
}
button {
  display: flex;
  align-items: center;
  justify-content: center;
  margin: 0;
  padding: 0;
  border: 0;
  background: none;
  color: inherit;
  font: inherit;
  white-space: nowrap;
}
.sprite { position: absolute; width: 0; height: 0; }
.ic { width: 16px; height: 16px; flex: none; }
.caret {
  flex: none;
  border: 3px solid transparent;
  border-top: 4px solid #53585c;
  border-bottom: 0;
}
.off { color: #a6a9ac; }
.off .caret { border-top-color: #a6a9ac; }
.vline { width: 1px; height: 20px; background: #b9bdc0; }

.app {
  display: flex;
  flex-direction: column;
  height: 100vh;
  margin: 0 103px;
  overflow: hidden;
  background: #f8f9fb;
}

/* Title bar */
.titlebar { display: flex; align-items: center; flex: none; height: 24px; background: #d8dddd; }
.brand { display: flex; align-items: center; gap: 3px; width: 71px; padding-left: 7px; font: 16px/20px "Open Sans", sans-serif; }
.brand sup { font-size: 6px; line-height: 6px; vertical-align: 6px; }
.brand .ic { width: 13px; height: 13px; }
.quick { display: flex; }
.quick button { width: 21px; height: 20px; }
.quick .ic { width: 15px; height: 15px; }
.quick .slim { width: 11px; }
.quick .customize { border-left: 1px solid #c1c6c6; }
.titlebar h1 { flex: 1; margin: 0; padding-right: 28px; text-align: center; font: 11px/14px "Noto Sans", sans-serif; }

/* Tabs */
.tabs { display: flex; flex: none; height: 25px; background: #3b4446; color: #fff; font-size: 12px; }
.tab.file { width: 52px; background: linear-gradient(#5cb947, #4aa637); }
.tab.model { width: 74px; background: #f8f9fb; color: #3e8f2d; }
.tab.analysis { width: 80px; }
.tab.live { width: 122px; }
.tab.annotate { width: 88px; }
.tab.tools { width: 68px; }
.tab.view { width: 62px; }
.tab.flexible { width: 136px; }
.tab.apps { width: 102px; }

/* Ribbon */
.ribbon { display: flex; flex: none; height: 94px; border-bottom: 2px solid #dcdee1; overflow: hidden; }
.group { display: grid; grid-template-rows: 71px 21px; flex: none; border-right: 1px solid #cfd2d5; }
.items { display: flex; }
.col { display: flex; flex-direction: column; }
.cmd { justify-content: flex-start; gap: 3px; height: 24px; }
.cmd:first-child { height: 23px; }
.cmd .caret { margin-left: 4px; }
.gname { gap: 4px; padding-top: 2px; }
.big { flex-direction: column; justify-content: flex-start; gap: 1px; padding-top: 3px; }
.big svg { width: 30px; height: 30px; margin-bottom: 6px; }
.big .caret { margin-top: 3px; }
.operations { width: 98px; }
.operations .big { width: 64px; }
.getdata { width: 128px; }
.getdata .items, .bodygrp .items, .engineering .items { padding-left: 4px; }
.bodygrp { width: 121px; }
.datum { width: 189px; }
.datum .big { width: 39px; }
.datum .col { width: 109px; }
.shapes { width: 129px; }
.shapes .big { width: 45px; }
.engineering { width: 140px; }
.engineering .col { width: 75px; }
.editing { width: 311px; }
.editing .big { width: 44px; }
.editing .cmd { gap: 2px; }
.editing .c1 { width: 54px; }
.editing .c2 { width: 64px; }
.editing .c3 { width: 59px; }

/* Work area */
.work { display: flex; flex: 1; min-height: 0; }
.side { display: flex; flex-direction: column; flex: none; width: 233px; }
.sidetabs { display: flex; flex: none; height: 22px; background: #d8dddd; }
.stab { width: 27px; }
.stab .ic { width: 14px; height: 14px; }
.stab.on { background: #f8f9fb; }
.sidetools { display: flex; align-items: center; height: 29px; padding-left: 6px; }
.sidetools button { width: 20px; height: 21px; }
.sidetools .ic { width: 15px; height: 15px; }
.sidetools .grip { height: 14px; margin: 0 14px 0 1px; border-left: 2px dotted #b7bbbe; }
.sidetools .vline { margin: 0 4px; }
.sidetools .more { width: 18px; font: 14px/20px "Open Sans", sans-serif; }
.pressed { background: #dadcde; outline: 1px solid #b0b3b6; }
.search { display: flex; align-items: center; height: 24px; padding-left: 9px; gap: 2px; }
.search > .ic { width: 15px; height: 15px; }
.box { display: flex; align-items: center; width: 166px; height: 24px; padding-right: 3px; border: 1px solid #b9bcbf; background: #fff; color: #888c90; }
.box input { flex: 1; min-width: 0; border: 0; outline: 0; background: none; font: inherit; }
.box svg { width: 10px; height: 10px; }
.search button { width: 12px; height: 20px; }
.search .plus { width: 18px; }
.plus svg { width: 9px; height: 9px; }

/* Model tree */
.tree {
  display: grid;
  grid-auto-rows: 1fr;
  height: 277px;
  margin: 4px 0 0;
  padding: 0;
  list-style: none;
  font: 9px/14px "Noto Sans", sans-serif;
}
.tree li { position: relative; display: flex; align-items: center; gap: 4px; padding-left: 26px; }
.tree .root { padding-left: 9px; gap: 6px; }
.tree .ti { width: 14px; height: 14px; flex: none; }
.root .ti { width: 12px; height: 12px; }
.tree li:not(.root)::before { content: ""; position: absolute; left: 16px; top: 0; bottom: 0; border-left: 1px solid #b5b8bb; }
.tree li:not(.root):not(.exp)::after { content: ""; position: absolute; left: 16px; top: 7px; width: 8px; border-top: 1px solid #b5b8bb; }
.tree .exp::after { content: ""; position: absolute; left: 14px; top: 4px; border: 3px solid transparent; border-left: 4px solid #53585c; border-right: 0; }
.tree .hiddenitem { color: #b5b3a6; }
.blue { color: #2f8db2; }
.insert { height: 5px; margin: 4px 5px 0 9px; border: solid #4bae4f; border-width: 0 1px; background: linear-gradient(#62b75e, #62b75e) center / 100% 2px no-repeat; }

/* Graphics area */
.canvas { position: relative; flex: 1; min-width: 0; border-left: 1px solid #dcdfe2; background: #e8eaee; overflow: hidden; }
.scene { display: block; width: 100%; }
.ink { fill: none; stroke: #0878d4; stroke-width: 14; stroke-linecap: round; stroke-linejoin: round; }
.viewbar { position: absolute; left: 373px; top: 6px; display: flex; width: 362px; height: 26px; padding: 2px 4px 2px 1px; border: 1px solid #b3b6ba; background: #f9fafc; }
.viewbar button { position: relative; flex: 1; }
.viewbar .pressed { outline-offset: -1px; }
.drop::after { content: ""; position: absolute; right: 0; bottom: 1px; border: 2px solid #4a4f53; border-left-color: transparent; border-top-color: transparent; }

/* Status bar */
.status { display: flex; align-items: center; flex: none; height: 29px; padding-left: 5px; border-top: 1px solid #d3d6d9; font: 9px/14px "Noto Sans", sans-serif; }
.status button { width: 17px; height: 18px; margin-right: 4px; }
.status p { flex: 1; margin: 0 0 0 7px; }
.status button:last-child { margin: 0 0 0 4px; }
```
FILE: gear.js
```js
// Each tooth: the two corners of its tip, then the flank and root points up to the next tooth.
const teeth = [
  [[830,250],[841,250],[845,260],[849,275],[850,284],[855,289],[862,289],[866,286],[869,276],[875,263]],
  [[882,258],[891,262],[893,277],[891,293],[893,300],[901,306],[906,303],[912,295],[920,288]],
  [[929,284],[937,290],[937,305],[931,318],[928,324],[931,330],[937,335],[943,332],[957,326]],
  [[970,323],[976,332],[972,343],[963,355],[957,362],[957,367],[963,375],[970,373],[983,372]],
  [[997,374],[1000,384],[993,393],[980,402],[974,406],[974,414],[979,419],[993,422]],
  [[1009,429],[1011,441],[997,447],[982,449],[977,453],[977,463],[988,470]],
  [[1007,484],[1004,497],[990,497],[977,495],[971,494],[966,503],[967,509],[977,518]],
  [[988,536],[982,545],[967,540],[954,532],[948,532],[942,539],[943,545],[951,557]],
  [[956,576],[948,582],[935,573],[925,562],[920,559],[911,563],[909,570],[913,582]],
  [[913,602],[903,604],[893,593],[887,580],[883,574],[872,574],[869,582],[868,597]],
  [[865,610],[853,611],[847,598],[843,587],[843,578],[838,573],[830,572],[826,577],[823,587]],
  [[813,602],[802,599],[799,583],[800,567],[798,560],[789,555],[785,558],[778,568]],
  [[766,577],[756,569],[757,553],[764,538],[763,532],[755,526],[747,530]],
  [[724,537],[718,527],[725,513],[735,503],[736,498],[731,487],[723,487],[710,490]],
  [[697,488],[693,477],[703,464],[719,458],[719,452],[715,442],[698,440]],
  [[683,433],[683,419],[697,414],[713,412],[716,407],[716,398],[710,394],[698,387]],
  [[686,377],[689,364],[703,364],[720,368],[724,365],[727,357],[722,348],[712,337]],
  [[704,326],[710,316],[725,320],[738,329],[745,329],[750,321],[748,315],[742,302]],
  [[737,286],[746,278],[760,290],[770,301],[777,302],[784,296],[781,282],[779,270]],
  [[780,260],[789,256],[800,270],[807,283],[812,288],[820,288],[823,280],[825,263]]
];
const depth = [49, -20];
const steps = 6;
const outline = [];
const run = [];

teeth.forEach((tooth, n) => {
  const next = teeth[(n + 1) % teeth.length][0];
  const pts = tooth.slice(1).concat([next]);
  outline.push(tooth[0]);
  run.push("tip" + n);
  for (let i = 0; i < pts.length - 1; i++) {
    const a = pts[Math.max(i - 1, 0)], b = pts[i], c = pts[i + 1], d = pts[Math.min(i + 2, pts.length - 1)];
    for (let s = 0; s < steps; s++) {
      const t = s / steps;
      outline.push([0, 1].map(k => 0.5 * (2 * b[k] + (c[k] - a[k]) * t
        + (2 * a[k] - 5 * b[k] + 4 * c[k] - d[k]) * t * t
        + (3 * b[k] - a[k] - 3 * c[k] + d[k]) * t * t * t)));
      run.push("flank" + n);
    }
  }
});

const gear = document.getElementById("gear");
function polygon(points, fill, edge, width) {
  const p = document.createElementNS("http://www.w3.org/2000/svg", "polygon");
  p.setAttribute("points", points.map(q => q[0].toFixed(2) + "," + q[1].toFixed(2)).join(" "));
  p.setAttribute("fill", fill);
  p.setAttribute("stroke", edge);
  p.setAttribute("stroke-width", width);
  p.setAttribute("stroke-linejoin", "round");
  gear.appendChild(p);
}

const total = outline.length;
const at = i => outline[(i + total) % total];
const normals = outline.map((p, i) => {
  const q = at(i + 1), dx = q[0] - p[0], dy = q[1] - p[1], len = Math.hypot(dx, dy) || 1;
  return [dy / len, -dx / len];
});

// Upward light, averaged over neighbouring segments of the same flank.
function light(i) {
  let sum = 0, count = 0;
  for (let k = -4; k <= 4; k++) {
    const j = (i + k + total) % total;
    if (run[j] === run[i]) {
      sum += Math.max(0, -normals[j][1]);
      count++;
    }
  }
  return sum / count;
}

const walls = [];
outline.forEach((p, i) => {
  const q = at(i + 1);
  if (normals[i][0] * depth[0] + normals[i][1] * depth[1] <= 0) return;
  const glow = light(i) * (run[i].startsWith("tip") ? 0.6 : 1);
  const rgb = [80, 87, 97].map((v, k) => Math.round(v + glow * [48, 52, 55][k]));
  walls.push({
    order: (p[0] + q[0]) * depth[0] + (p[1] + q[1]) * depth[1],
    color: "rgb(" + rgb + ")",
    points: [p, q, [q[0] + depth[0], q[1] + depth[1]], [p[0] + depth[0], p[1] + depth[1]]]
  });
});
walls.sort((a, b) => a.order - b.order).forEach(w => polygon(w.points, w.color, w.color, 1));
polygon(outline, "#a0adbc", "#98a5b4", 0.5);
```
